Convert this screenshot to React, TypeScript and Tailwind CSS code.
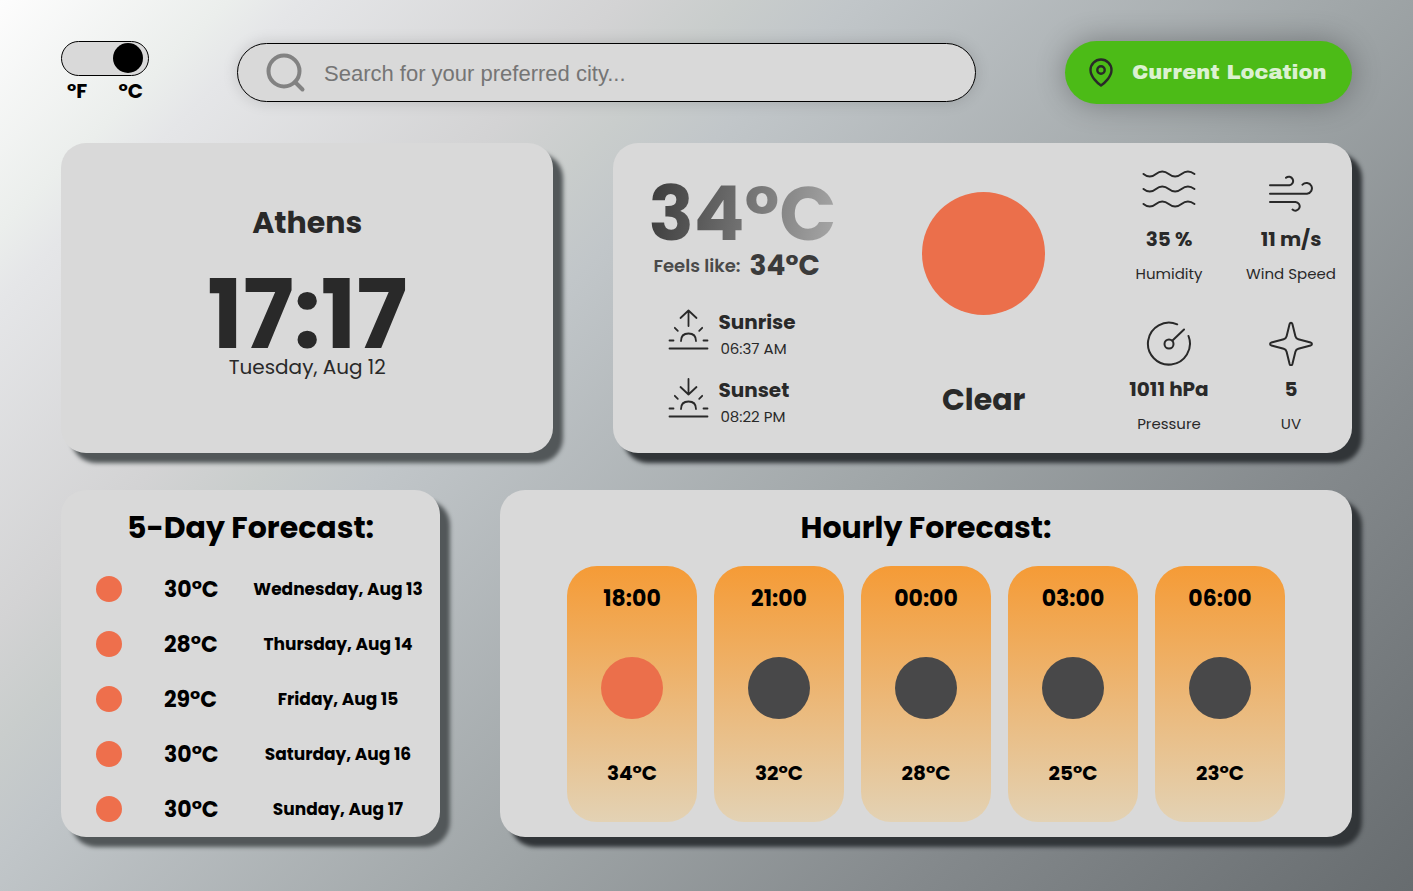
import { useState } from "react";
import type { ReactNode } from "react";

const card = "rounded-[25px] bg-[#d9d9d9] shadow-[10px_10px_4px_0px_#525759]";
const darkCard = "rounded-[25px] bg-[#d9d9d9] shadow-[10px_10px_4px_0px_#313538]";

function Disc({ className }: { className: string }) {
  return <span aria-hidden="true" className={`block shrink-0 rounded-full ${className}`} />;
}

function Icon({ children, className, viewBox = "0 0 48 48" }: { children: ReactNode; className: string; viewBox?: string }) {
  return (
    <svg aria-hidden="true" viewBox={viewBox} className={className} fill="none" stroke="#292929" strokeWidth="2" strokeLinecap="round" strokeLinejoin="round">
      {children}
    </svg>
  );
}

function SunIcon({ down = false }: { down?: boolean }) {
  return (
    <Icon className="mt-0.5 h-12 w-12 shrink-0">
      <path strokeWidth="1.8" d={down ? "M24.500 5v15.500M16.500 13l8 7.500 8-7.500" : "M24.500 20V4.500M16.500 12l8-7.500 8 7.500"} />
      <path strokeWidth="1.8" d="M17 35c0-5 3-7.500 7.500-7.500s7.500 2.500 7.500 7.500M5.500 34.500h4M39.500 34.500h4M10.800 21.800l3 3M38.200 21.800l-3 3M5.500 42.500h38" />
    </Icon>
  );
}

const metrics = [
  {
    value: "35 %",
    label: "Humidity",
    icon: (
      <Icon className="h-14 w-14" viewBox="0 0 56 56">
        <path d="M2.500 14c4 3.300 8.500 3.300 12.500 0s8.500-3.300 12.750 0 8.500 3.300 12.750 0 8.500-3.300 13 0M2.500 29c4 3.300 8.500 3.300 12.500 0s8.500-3.300 12.750 0 8.500 3.300 12.750 0 8.500-3.300 13 0M2.500 44c4 3.300 8.500 3.300 12.500 0s8.500-3.300 12.750 0 8.500 3.300 12.750 0 8.500-3.300 13 0" />
      </Icon>
    ),
  },
  {
    value: "11 m/s",
    label: "Wind Speed",
    icon: (
      <Icon className="h-14 w-14" viewBox="0 0 56 56">
        <path d="M7 25.300h19.500a4.300 4.300 0 1 0-3.500-7.500M7 33.700h37a5.400 5.400 0 1 0-4.500-9M7 42.100h25.500a4.300 4.300 0 1 1-3 7.500" />
      </Icon>
    ),
  },
  {
    value: "1011 hPa",
    label: "Pressure",
    icon: (
      <Icon className="h-14 w-14" viewBox="0 0 56 56">
        <path d="M36.200 14.300A21 21 0 1 0 47.500 26M31.500 30.500 43 19.500" />
        <circle cx="28" cy="34" r="4.500" />
      </Icon>
    ),
  },
  {
    value: "5",
    label: "UV",
    icon: (
      <Icon className="h-14 w-14" viewBox="0 0 56 56">
        <path d="M26.600 14c.5-1.800 2.300-1.800 2.800 0l3 12.300q.6 2.300 2.900 2.900l12.300 3.300c1.800.5 1.800 2.500 0 3l-12.300 3.300q-2.300.6-2.900 2.900l-3 12.300c-.5 1.800-2.300 1.800-2.800 0l-3-12.300q-.6-2.300-2.900-2.900L8.400 35.500c-1.800-.5-1.800-2.500 0-3l12.300-3.300q2.300-.6 2.900-2.900z" />
      </Icon>
    ),
  },
];

const days = [
  { temp: "30°C", date: "Wednesday, Aug 13" },
  { temp: "28°C", date: "Thursday, Aug 14" },
  { temp: "29°C", date: "Friday, Aug 15" },
  { temp: "30°C", date: "Saturday, Aug 16" },
  { temp: "30°C", date: "Sunday, Aug 17" },
];

const hours = [
  { time: "18:00", temp: "34°C", night: false },
  { time: "21:00", temp: "32°C", night: true },
  { time: "00:00", temp: "28°C", night: true },
  { time: "03:00", temp: "25°C", night: true },
  { time: "06:00", temp: "23°C", night: true },
];

function SunTime({ title, time, down }: { title: string; time: string; down?: boolean }) {
  return (
    <div className="flex items-start gap-1.5">
      <SunIcon down={down} />
      <div className="flex flex-col pt-1">
        <span className="text-xl leading-7 font-bold">{title}</span>
        <span className="pl-0.5 text-[15px] leading-[26px]">{time}</span>
      </div>
    </div>
  );
}

export default function App() {
  const [celsius, setCelsius] = useState(true);
  return (
    <main className="flex min-h-screen flex-col bg-[linear-gradient(135deg,#fdfdfd_0%,#ebeeec_10%,#e5e6e8_13%,#d3d3d4_27%,#c9cdcc_32%,#c1c6c9_37%,#a0a6a8_59%,#84898c_78%,#676c6f_100%)] px-[61px] pt-[41px] pb-[54px] font-[Poppins,Inter,sans-serif] text-[#292929]">
      <header className="flex items-start">
        <label className="w-[88px] cursor-pointer text-black">
          <input
            type="checkbox"
            role="switch"
            aria-label="Use Celsius"
            checked={celsius}
            onChange={(e) => setCelsius(e.target.checked)}
            className="peer sr-only"
          />
          <span className="flex h-[35px] items-start rounded-full border border-black bg-[#d9d9d9] px-[5px] pt-px peer-checked:justify-end">
            <Disc className="size-[30px] bg-black" />
          </span>
          <span className="flex justify-between px-1.5 py-px text-xl leading-7 font-bold">
            <span>°F</span>
            <span>°C</span>
          </span>
        </label>
        <div className="mt-0.5 ml-[88px] flex h-[59px] flex-1 items-center gap-4 rounded-full border border-black bg-[#d9d9d9] px-6 shadow-[0_0_15px_rgba(0,0,0,0.15)]">
          <svg aria-hidden="true" viewBox="0 0 46 46" className="size-[46px] shrink-0" fill="none" stroke="#828282" strokeWidth="4" strokeLinecap="round">
            <circle cx="22" cy="21" r="15.500" />
            <path d="m33 32 7.500 7.500" />
          </svg>
          <input
            type="search"
            aria-label="City"
            placeholder="Search for your preferred city..."
            className="min-w-0 flex-1 bg-transparent pt-0.5 font-['Liberation_Sans',sans-serif] text-[22px] outline-none placeholder:text-[#757575]"
          />
        </div>
        <button type="button" className="ml-[89px] flex h-[63px] w-[287px] items-center gap-4 rounded-full bg-[#4cbb17] pl-[21px] text-[#dbf1d1] shadow-[0_0_30px_rgba(0,0,0,0.3)]">
          <svg aria-hidden="true" viewBox="0 0 30 32" className="h-8 w-[30px] shrink-0" fill="none" stroke="#292929" strokeWidth="2.400" strokeLinejoin="round">
            <path d="M15 28.500C12 26.500 4.500 20 4.500 13a10.500 10.500 0 0 1 21 0c0 7-7.500 13.500-10.500 15.500Z" />
            <circle cx="15" cy="13" r="3.700" />
          </svg>
          <span className="font-['Archivo_Black',Inter,sans-serif] text-[21px] font-normal whitespace-nowrap">Current Location</span>
        </button>
      </header>

      <div className="mt-[37px] grid grid-cols-[2fr_3fr] gap-[60px]">
        <section className={`${card} flex min-h-[310px] flex-col items-center justify-center pb-[18px]`}>
          <h1 className="text-3xl leading-[45px] font-bold">Athens</h1>
          <time className="mt-[30px] text-[95px] leading-20 font-bold">17:17</time>
          <p className="text-xl leading-6">Tuesday, Aug 12</p>
        </section>

        <section className={`${darkCard} flex min-h-[310px]`}>
          <div className="flex w-[246px] flex-col pt-[34px] pl-[35px]">
            <p className="w-fit bg-[linear-gradient(100deg,#3a3a3a,#a8a8a8)] bg-clip-text text-[75px] leading-[74px] font-bold text-transparent">34°C</p>
            <p className="flex items-center gap-[9px] pl-[5px] whitespace-nowrap">
              <span className="text-lg leading-[30px] font-semibold text-[#4a4a4a]">Feels like:</span>
              <span className="text-[28px] leading-[30px] font-bold text-[#3b3b3b]">34°C</span>
            </p>
            <div className="mt-[23px] flex flex-col gap-2.5 pl-4">
              <SunTime title="Sunrise" time="06:37 AM" />
              <SunTime title="Sunset" time="08:22 PM" down />
            </div>
          </div>
          <div className="flex flex-1 flex-col items-center justify-between pt-[49px] pb-[31px]">
            <Disc className="size-[123px] bg-[#eb6f4b]" />
            <p className="text-3xl leading-[45px] font-bold">Clear</p>
          </div>
          <dl className="grid w-[244px] grid-cols-2 content-start gap-y-[7px] pt-[17px]">
            {metrics.map((m) => (
              <div key={m.label} className="flex h-[143px] flex-col items-center">
                {m.icon}
                <dd className="pt-2 text-xl leading-[30px] font-bold whitespace-nowrap">{m.value}</dd>
                <dt className="pt-2 text-[15px] leading-6 whitespace-nowrap">{m.label}</dt>
              </div>
            ))}
          </dl>
        </section>
      </div>

      <div className="mt-[37px] grid grid-cols-[379fr_852fr] gap-[60px] text-black">
        <section className={`${card} min-h-[347px] pt-[15px]`}>
          <h2 className="text-center text-[30px] leading-[45px] font-bold">5-Day Forecast:</h2>
          <ul className="mt-[11px]">
            {days.map((d) => (
              <li key={d.date} className="flex h-[55px] items-center pl-[35px]">
                <Disc className="size-[26px] bg-[#ee6f4c]" />
                <span className="w-[122px] pt-0.5 pl-[42px] text-[22px] font-bold">{d.temp}</span>
                <span className="flex-1 pt-0.5 pr-2 text-center text-[17px] font-bold whitespace-nowrap">{d.date}</span>
              </li>
            ))}
          </ul>
        </section>
        <section className={`${darkCard} min-h-[347px] pt-[15px]`}>
          <h2 className="text-center text-[30px] leading-[45px] font-bold">Hourly Forecast:</h2>
          <ul className="mt-4 grid grid-cols-5 gap-[17px] px-[67px]">
            {hours.map((h) => (
              <li key={h.time} className="flex h-[256px] flex-col items-center justify-between rounded-[30px] bg-[linear-gradient(180deg,#f59b36_0%,#e3d2b4_100%)] pt-[14px] pb-[34px]">
                <span className="text-[22px] leading-[38px] font-bold">{h.time}</span>
                <Disc className={h.night ? "size-[62px] bg-[#484849]" : "size-[62px] bg-[#eb6f4b]"} />
                <span className="text-xl leading-[30px] font-bold">{h.temp}</span>
              </li>
            ))}
          </ul>
        </section>
      </div>
    </main>
  );
}
